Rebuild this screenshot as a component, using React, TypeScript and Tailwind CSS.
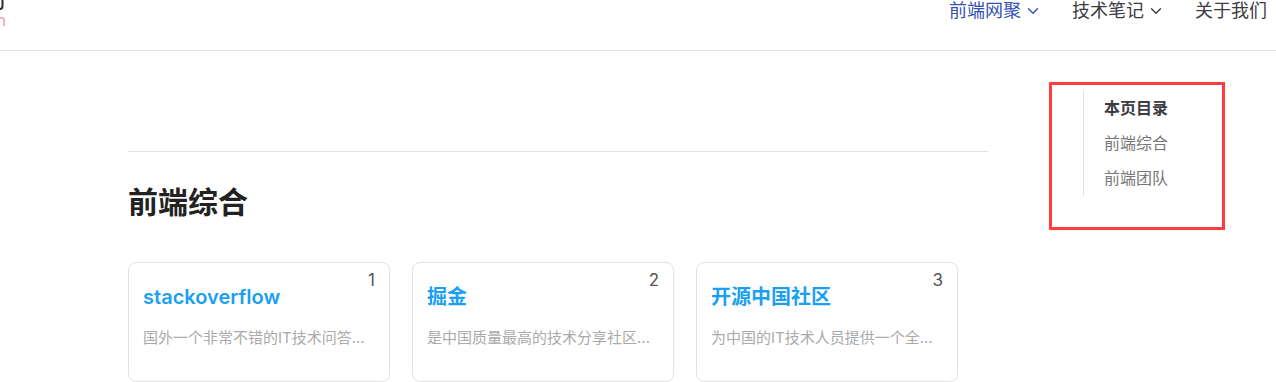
import { ChevronDown } from 'lucide-react'

const sites = [
  { no: 1, title: 'stackoverflow', desc: '国外一个非常不错的IT技术问答...' },
  { no: 2, title: '掘金', desc: '是中国质量最高的技术分享社区...' },
  { no: 3, title: '开源中国社区', desc: '为中国的IT技术人员提供一个全...' },
]

const font = { fontFamily: 'Inter, "Noto Sans CJK SC", sans-serif' }

export default function App() {
  return (
    <div className="w-[1276px] h-[382px] overflow-hidden bg-white text-[#3c3c43]" style={font}>
      {/* Header */}
      <header className="h-[51px] border-b border-[#e2e2e3] flex items-start justify-between">
        <svg width="8" height="30" viewBox="0 0 8 30" className="shrink-0">
          <path d="M2.5 0 V6 Q2.5 9 0 9" stroke="#2c2c2c" strokeWidth="2" fill="none" />
          <path d="M0 18 H2 Q4 18 4 20.5 V26" stroke="#f4a39a" strokeWidth="1.6" fill="none" />
        </svg>
        <nav className="flex items-center gap-[30px] pr-[9px] text-[18px] leading-[21px]">
          <div className="flex items-center gap-[3px] text-[#3451b2]">
            <span>前端网聚</span>
            <ChevronDown size={18} strokeWidth={1.8} />
          </div>
          <div className="flex items-center gap-[3px]">
            <span>技术笔记</span>
            <ChevronDown size={18} strokeWidth={1.8} />
          </div>
          <span>关于我们</span>
        </nav>
      </header>

      <main className="flex pl-[128px]">
        {/* Content */}
        <div className="w-[860px] shrink-0">
          <div className="mt-[100px] border-t border-[#e2e2e3]" />
          <h2 className="mt-[30px] text-[30px] leading-[40px] font-bold text-[#222]">前端综合</h2>
          <div className="mt-[40px] flex gap-[22px]">
            {sites.map(s => (
              <div key={s.no} className="relative w-[262px] h-[120px] shrink-0 rounded-lg border border-[#e2e2e3] px-[14px] pt-[22px]">
                <span className="absolute top-[5px] right-[14px] text-[17px] leading-[24px] text-[#555]">{s.no}</span>
                <div className="text-[20px] leading-[24px] font-semibold text-[#1a9ff2]">{s.title}</div>
                <div className="mt-[19px] text-[15px] leading-[20px] text-[#aaaaaa]">{s.desc}</div>
              </div>
            ))}
          </div>
        </div>

        {/* TOC */}
        <aside className="relative ml-[95px] mt-[40px] h-[105px] border-l border-[#e2e2e3] pl-[20px] text-[16px] leading-[35px]">
          <div className="absolute -left-[35px] -top-[9px] w-[176px] h-[148px] border-[3px] border-[#ff3b3b]" />
          <div className="font-semibold text-[#3c3c43]">本页目录</div>
          <div className="text-[#777]">前端综合</div>
          <div className="text-[#777]">前端团队</div>
        </aside>
      </main>
    </div>
  )
}
